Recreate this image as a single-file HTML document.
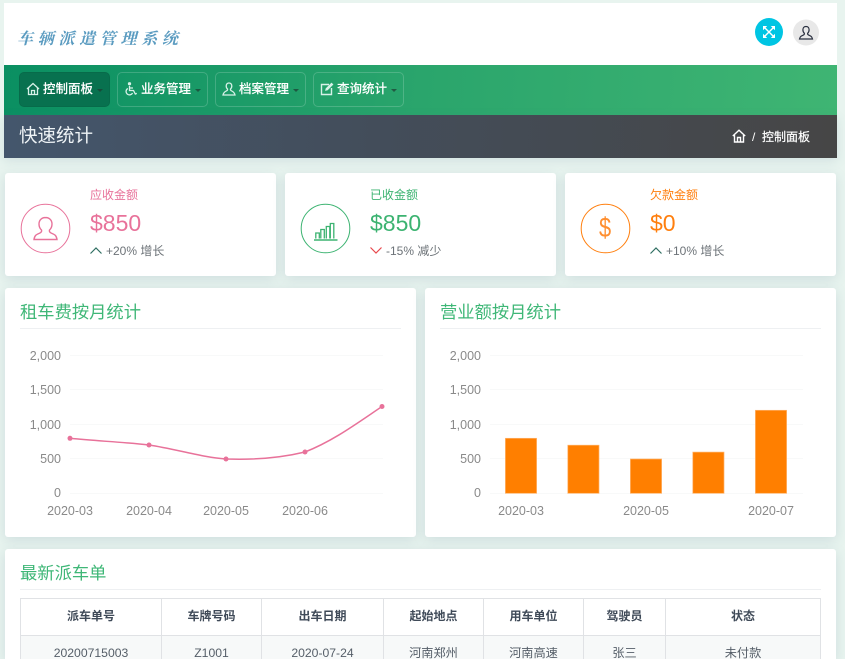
<!DOCTYPE html>
<html lang="zh"><head><meta charset="utf-8"><title>车辆派遣管理系统</title>
<style>
html,body{margin:0;padding:0;width:845px;height:659px;overflow:hidden;background:#e8f4ef;font-family:"Liberation Sans","Noto Sans CJK SC",sans-serif}
#w{position:relative;width:845px;height:659px;overflow:hidden;background:#e8f4ef}
.a{position:absolute}
.t{position:absolute;white-space:nowrap;line-height:1}
.card{position:absolute;background:#fff;border-radius:3px;box-shadow:0 3px 12px rgba(90,120,150,.18)}
.nb{position:absolute;top:72px;height:33px;border:1px solid rgba(255,255,255,.18);border-radius:5px;color:#fff;font-size:12.5px;font-weight:500;-webkit-text-stroke:.1px #fff;line-height:33px;white-space:nowrap}
.nb svg{position:absolute;left:6px;top:9px}
.nb span{position:absolute;left:23px;top:0}
.nb i{position:absolute;right:6px;top:16px;width:0;height:0;border:3px solid transparent;border-top-color:rgba(30,60,50,.7);border-bottom:0}
.h{font-size:17.300px;color:#3fb777;font-weight:400}
.hr{position:absolute;height:1px;background:#eef0f2}
.th,.td{position:absolute;text-align:center;white-space:nowrap}
.th{top:598px;height:37px;line-height:37px;color:#3f4a58;font-weight:700;font-size:12px}
.td{top:636px;height:34px;line-height:34px;color:#555e68;font-size:12.200px}
.l{position:absolute;background:#e0e2e5}
</style></head>
<body><div id="w">
<div class="a" style="left:4px;top:3px;width:833px;height:62px;background:#fff"></div>
<div class="t" style="left:17px;top:30px;font-size:16px;letter-spacing:4.700px;color:#5a9bc0;font-family:'Noto Serif CJK SC','WenQuanYi Zen Hei',serif;font-style:italic;font-weight:700">车辆派遣管理系统</div>

<svg class="a" style="left:755px;top:18px" width="28" height="28" viewBox="0 0 28 28"><circle cx="14" cy="14" r="14" fill="#00c5e3"/><path d="M9.500 9.500L18.500 18.500M18.500 9.500L9.500 18.500" stroke="#fff" stroke-width="1.400" fill="none"/><path d="M8 8h4.200L8 12.200zM20 8v4.200L15.800 8zM8 20v-4.200L12.200 20zM20 20h-4.200L20 15.800z" fill="#fff"/></svg>
<svg class="a" style="left:793px;top:19px" width="26" height="27" viewBox="0 0 26 27"><circle cx="13" cy="13.500" r="13" fill="#e8e8e8"/><path d="M13 7.500c-2 0-3.100 1.400-3.100 3.300 0 1.500.6 2.700 1.400 3.400.3.800 0 1.400-1 1.900-1.900.8-3.300 1.300-3.800 3.900h13c-.5-2.600-1.900-3.100-3.800-3.900-1-.5-1.300-1.100-1-1.900.8-.7 1.400-1.900 1.400-3.400C16.100 8.900 15 7.500 13 7.500z" fill="none" stroke="#2a3040" stroke-width="1.200"/></svg>

<div class="a" style="left:4px;top:65px;width:833px;height:50px;background:linear-gradient(95deg,#0a8f62 0%,#2aa56c 50%,#3fb573 100%)"></div>

<div class="nb" style="left:19px;width:89px;background:#08714f;border-color:rgba(0,0,0,.05)">
<svg width="14" height="14" viewBox="0 0 14 14" fill="none" stroke="#d7f1e8" stroke-width="1.300"><path d="M1 7L7 1.500 13 7M2.500 6v6.500h9V6M5.500 12.500V8.500h3v4"/></svg><span>控制面板</span><i></i></div>
<div class="nb" style="left:117px;width:89px">
<svg width="14" height="14" viewBox="0 0 14 14" fill="none" stroke="#d7f1e8" stroke-width="1.300"><circle cx="5.500" cy="1.800" r="1" fill="#d7f1e8"/><path d="M5.500 4v4.500h4l1.800 3.500 1.500-.6M5.500 6h3.500M3.800 6.500A3.400 3.400 0 1 0 8.500 11"/></svg><span>业务管理</span><i></i></div>
<div class="nb" style="left:215px;width:89px">
<svg width="14" height="14" viewBox="0 0 14 14" fill="none" stroke="#d7f1e8" stroke-width="1.300"><path d="M7 1C5.300 1 4.200 2.200 4.200 4c0 1.300.6 2.400 1.300 3 .2.800 0 1.300-.9 1.800C3 9.500 1.500 10.500 1 13h12c-.5-2.500-2-3.500-3.600-4.200-.9-.5-1.100-1-.9-1.800.7-.6 1.300-1.700 1.300-3C9.800 2.200 8.700 1 7 1z"/></svg><span>档案管理</span><i></i></div>
<div class="nb" style="left:313px;width:89px">
<svg width="14" height="14" viewBox="0 0 14 14" fill="none" stroke="#d7f1e8" stroke-width="1.400"><path d="M9 2.500H1.500v10h10V6"/><path d="M5.500 8.500l.5-2L11.500 1l1.500 1.500L7.500 8z" fill="#d7f1e8" stroke-width=".6"/></svg><span>查询统计</span><i></i></div>

<div class="a" style="left:4px;top:115px;width:833px;height:43px;background:linear-gradient(92deg,#44566c 0%,#434d5a 45%,#464646 100%);box-shadow:0 3px 10px rgba(90,120,150,.15)"></div>
<div class="t" style="left:19px;top:127px;font-size:18.500px;color:#eef3f6">快速统计</div>
<svg class="a" style="left:732px;top:129px" width="14" height="14" viewBox="0 0 14 14" fill="none" stroke="#fff" stroke-width="1.400"><path d="M.8 7L7 1.200 13.200 7M2.500 6v7h9V6M5.500 13V8.500h3V13"/></svg>
<div class="t" style="left:752px;top:131px;font-size:12px;color:#fff">/</div>
<div class="t" style="left:762px;top:131px;font-size:12px;color:#fff;-webkit-text-stroke:.2px #fff">控制面板</div>

<!-- stat cards -->
<div class="card" style="left:5px;top:173px;width:271px;height:103px"></div>
<div class="card" style="left:285px;top:173px;width:271px;height:103px"></div>
<div class="card" style="left:565px;top:173px;width:271px;height:103px"></div>

<svg class="a" style="left:20px;top:203px" width="51" height="51" viewBox="0 0 51 51" fill="none" stroke="#e8729a"><circle cx="25.500" cy="25.500" r="24.300"/><path stroke-width="1.400" d="M25.500 14.500c-3.600 0-6.500 2.400-6.500 6.500 0 2.700 1 4.700 2.500 6 .4 1.300-.2 2.400-1.800 3.100-3 1.200-5.200 2.200-5.700 6.400h23c-.5-4.200-2.700-5.200-5.700-6.400-1.600-.7-2.200-1.800-1.800-3.100 1.500-1.300 2.500-3.300 2.500-6 0-4.100-2.900-6.500-6.500-6.500z"/></svg>
<svg class="a" style="left:300px;top:203px" width="51" height="51" viewBox="0 0 51 51" fill="none" stroke="#3cb371"><circle cx="25.500" cy="25.500" r="24.300"/><path stroke-width="1.300" d="M15.800 35.500V30h3.500v5.500M20.800 35.500V26.500h3.500v9M26.300 35.500V23.500h3.500v12M30.300 35.500V20.500h3.500v15"/><path stroke-width="1.500" d="M14 37h23.500"/></svg>
<svg class="a" style="left:580px;top:203px" width="51" height="51" viewBox="0 0 51 51" fill="none" stroke="#ff7f0e"><circle cx="25.500" cy="25.500" r="24.300"/></svg>
<div class="t" style="left:599px;top:214px;font-size:28px;color:#ff8f30;transform:scaleX(.78);transform-origin:left top">$</div>

<div class="t" style="left:90px;top:189px;font-size:12px;color:#e8729a">应收金额</div>
<div class="t" style="left:90px;top:212px;font-size:23px;color:#e8729a">$850</div>
<svg class="a" style="left:90px;top:246px" width="12" height="9" viewBox="0 0 12 9" fill="none" stroke="#2f6f62" stroke-width="1.200"><path d="M.5 7.500L6 2l5.500 5.500"/></svg>
<div class="t" style="left:106px;top:245px;font-size:12px;color:#6d7378">+20% 增长</div>

<div class="t" style="left:370px;top:189px;font-size:12px;color:#3cb371">已收金额</div>
<div class="t" style="left:370px;top:212px;font-size:23px;color:#3cb371">$850</div>
<svg class="a" style="left:370px;top:246px" width="12" height="9" viewBox="0 0 12 9" fill="none" stroke="#e8474c" stroke-width="1.200"><path d="M.5 1.500L6 7l5.500-5.500"/></svg>
<div class="t" style="left:386px;top:245px;font-size:12px;color:#6d7378">-15% 减少</div>

<div class="t" style="left:650px;top:189px;font-size:12px;color:#ff7f0e">欠款金额</div>
<div class="t" style="left:650px;top:212px;font-size:23px;color:#ff7f0e">$0</div>
<svg class="a" style="left:650px;top:246px" width="12" height="9" viewBox="0 0 12 9" fill="none" stroke="#2f6f62" stroke-width="1.200"><path d="M.5 7.500L6 2l5.500 5.500"/></svg>
<div class="t" style="left:666px;top:245px;font-size:12px;color:#6d7378">+10% 增长</div>

<!-- charts -->
<div class="card" style="left:5px;top:288px;width:411px;height:249px"></div>
<div class="card" style="left:425px;top:288px;width:411px;height:249px"></div>
<div class="t h" style="left:20px;top:304px">租车费按月统计</div>
<div class="t h" style="left:440px;top:304px">营业额按月统计</div>
<div class="hr" style="left:20px;top:328px;width:381px"></div>
<div class="hr" style="left:440px;top:328px;width:381px"></div>

<svg class="a" style="left:0;top:340px" width="845" height="185" viewBox="0 340 845 185" font-family="Liberation Sans,sans-serif" font-size="12.500" fill="#8a8a8a">
<g stroke="#f8f9f9" stroke-width="1"><path d="M70 355.500H383M70 389.500H383M70 424.500H383M70 458.500H383M70 493.500H383M490 355.500H803M490 389.500H803M490 424.500H803M490 458.500H803M490 493.500H803"/></g>
<g text-anchor="end"><text x="61" y="360">2,000</text><text x="61" y="394">1,500</text><text x="61" y="429">1,000</text><text x="61" y="463">500</text><text x="61" y="497">0</text>
<text x="481" y="360">2,000</text><text x="481" y="394">1,500</text><text x="481" y="429">1,000</text><text x="481" y="463">500</text><text x="481" y="497">0</text></g>
<g text-anchor="middle"><text x="70" y="515">2020-03</text><text x="149" y="515">2020-04</text><text x="226" y="515">2020-05</text><text x="305" y="515">2020-06</text>
<text x="521" y="515">2020-03</text><text x="646" y="515">2020-05</text><text x="771" y="515">2020-07</text></g>
<path d="M70 438.300C96 441 123 442 149 445 176 449 200 457 226 459 254 460 280 458 305 452 333 441 356 424 382 406.500" fill="none" stroke="#e8729a" stroke-width="1.500"/>
<g fill="#e8729a"><circle cx="70" cy="438.300" r="2.500"/><circle cx="149" cy="445" r="2.500"/><circle cx="226" cy="459" r="2.500"/><circle cx="305" cy="452" r="2.500"/><circle cx="382" cy="406.500" r="2.500"/></g>
<g fill="#ff7f00" stroke="#ffb36b" stroke-width=".7"><rect x="505.400" y="438.300" width="31.200" height="55"/><rect x="567.800" y="445.200" width="31.200" height="48.100"/><rect x="630.400" y="459" width="31.200" height="34.300"/><rect x="692.800" y="452.100" width="31.200" height="41.200"/><rect x="755.400" y="410.300" width="31.200" height="83"/></g>
</svg>

<!-- table card -->
<div class="card" style="left:5px;top:549px;width:831px;height:110px;border-radius:3px 3px 0 0"></div>
<div class="t h" style="left:20px;top:565px">最新派车单</div>
<div class="hr" style="left:20px;top:589px;width:801px"></div>
<div class="a" style="left:21px;top:636px;width:799px;height:23px;background:#f7f9f9"></div>
<div class="l" style="left:20px;top:598px;width:801px;height:1px"></div>
<div class="l" style="left:20px;top:635px;width:801px;height:1px"></div>
<div class="l" style="left:20px;top:598px;width:1px;height:61px"></div>
<div class="l" style="left:161px;top:598px;width:1px;height:61px"></div>
<div class="l" style="left:261px;top:598px;width:1px;height:61px"></div>
<div class="l" style="left:383px;top:598px;width:1px;height:61px"></div>
<div class="l" style="left:483px;top:598px;width:1px;height:61px"></div>
<div class="l" style="left:583px;top:598px;width:1px;height:61px"></div>
<div class="l" style="left:665px;top:598px;width:1px;height:61px"></div>
<div class="l" style="left:820px;top:598px;width:1px;height:61px"></div>

<div class="th" style="left:21px;width:140px">派车单号</div>
<div class="th" style="left:162px;width:99px">车牌号码</div>
<div class="th" style="left:262px;width:121px">出车日期</div>
<div class="th" style="left:384px;width:99px">起始地点</div>
<div class="th" style="left:484px;width:99px">用车单位</div>
<div class="th" style="left:584px;width:81px">驾驶员</div>
<div class="th" style="left:666px;width:154px">状态</div>

<div class="td" style="left:21px;width:140px">20200715003</div>
<div class="td" style="left:162px;width:99px">Z1001</div>
<div class="td" style="left:262px;width:121px">2020-07-24</div>
<div class="td" style="left:384px;width:99px">河南郑州</div>
<div class="td" style="left:484px;width:99px">河南高速</div>
<div class="td" style="left:584px;width:81px">张三</div>
<div class="td" style="left:666px;width:154px">未付款</div>
</div></body></html>
